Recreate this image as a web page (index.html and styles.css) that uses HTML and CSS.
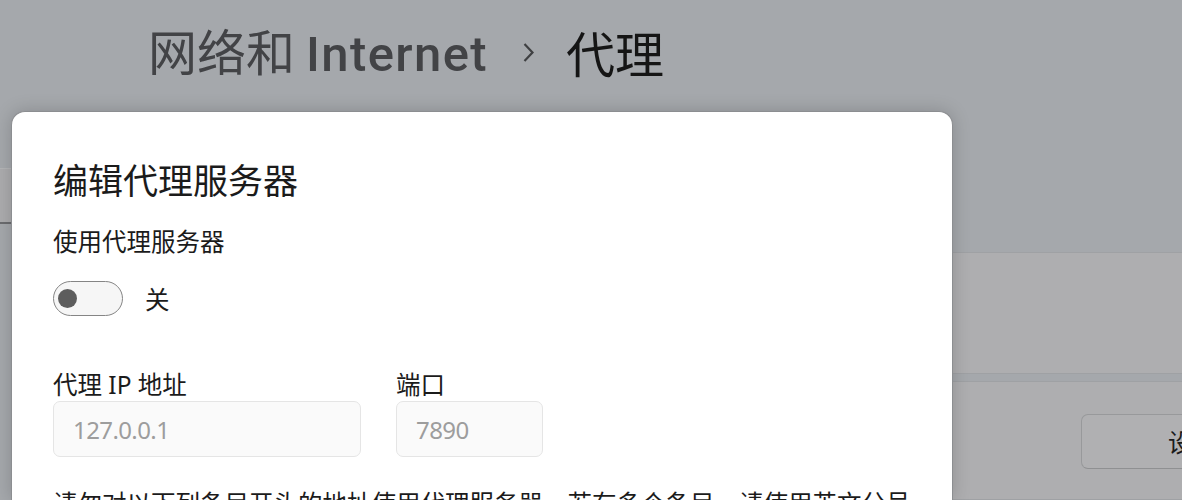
FILE: index.html
```html
<!DOCTYPE html>
<html lang="zh-CN">
<head>
<meta charset="utf-8">
<title>代理</title>
<link rel="stylesheet" href="styles.css">
</head>
<body>
<div class="page">
  <header class="header">
    <span class="crumb"><span class="crumb-cjk">网络和</span> <span class="crumb-latin">Internet</span></span>
    <svg class="chev" width="13" height="21" viewBox="0 0 13 21"><path d="M2.5 2 L10.5 10.5 L2.5 19" fill="none" stroke="#3f4042" stroke-width="2.2"/></svg>
    <span class="crumb-cur">代理</span>
  </header>
  <div class="main">
    <nav class="nav">
      <div class="search"></div>
    </nav>
    <section class="content">
      <div class="card card-top"></div>
      <div class="card card-bottom">
        <button class="btn">设置</button>
      </div>
    </section>
  </div>
</div>

<div class="dialog">
  <h1 class="title">编辑代理服务器</h1>
  <div class="label">使用代理服务器</div>
  <div class="toggle-row">
    <span class="toggle"><span class="knob"></span></span>
    <span class="toggle-text">关</span>
  </div>
  <div class="fields">
    <div class="field">
      <div class="field-label">代理 IP 地址</div>
      <div class="input input-ip">127.0.0.1</div>
    </div>
    <div class="field">
      <div class="field-label">端口</div>
      <div class="input input-port">7890</div>
    </div>
  </div>
  <p class="desc">请勿对以下列条目开头的地址使用代理服务器。若有多个条目，请使用英文分号(;)来分隔。</p>
</div>
</body>
</html>
```

FILE: styles.css
```css
* { box-sizing: border-box; }

html, body {
  margin: 0;
  padding: 0;
}

body {
  width: 1182px;
  height: 500px;
  overflow: hidden;
  background: #a5a8ac;
  font-family: "Noto Sans", "Noto Sans CJK SC", sans-serif;
  position: relative;
}

.page {
  width: 1182px;
  height: 500px;
  overflow: hidden;
  display: flex;
  flex-direction: column;
}

.header {
  height: 104px;
  flex: none;
  display: flex;
  align-items: center;
  padding-left: 148px;
  font-size: 49px;
  line-height: 60px;
}

.crumb {
  color: #424346;
  font-family: "Noto Sans CJK SC", sans-serif;
  white-space: nowrap;
}

.crumb-cjk {
  font-weight: 400;
}

.crumb-latin {
  font-family: "Roboto", sans-serif;
  font-weight: 500;
  letter-spacing: 1.4px;
}

.chev {
  margin-left: 34px;
  margin-right: 31px;
  flex: none;
}

.crumb-cur {
  color: #151515;
  font-family: "Noto Sans CJK SC", sans-serif;
  font-weight: 400;
}

.main {
  flex: 1;
  display: flex;
}

.nav {
  width: 470px;
  flex: none;
  padding-top: 64px;
}

.search {
  height: 56px;
  background: #acacae;
  border-top: 1px solid #b4b5b7;
  border-bottom: 2px solid #6b6c6f;
}

.content {
  flex: 1;
  min-width: 0;
  padding-top: 148px;
  display: flex;
  flex-direction: column;
  gap: 7px;
}

.card {
  background: #aeaeb0;
  border: 1px solid #9fa1a4;
  border-right: none;
}

.card-top {
  height: 122px;
}

.card-bottom {
  flex: 1;
  display: flex;
  align-items: flex-start;
  padding: 32px 0 0 610px;
}

.btn {
  flex: none;
  width: 223px;
  height: 55px;
  background: #b0b0b2;
  border: 1px solid #98999b;
  border-bottom-color: #8f9092;
  border-radius: 7px;
  font-family: "Noto Sans CJK SC", sans-serif;
  font-size: 24.5px;
  color: #1a1a1a;
  padding: 0;
}

.dialog {
  position: absolute;
  left: 11px;
  top: 111px;
  width: 942px;
  height: 389px;
  overflow: hidden;
  background: #ffffff;
  border: 1px solid #8c8e91;
  border-bottom: none;
  border-radius: 14px 14px 0 0;
  box-shadow: 0 0 18px rgba(0, 0, 0, 0.18);
  padding: 42px 38px 0 41px;
  font-family: "Noto Sans", "Noto Sans CJK SC", sans-serif;
  color: #1b1b1b;
}

.title {
  margin: 0;
  font-family: "Noto Sans CJK SC", sans-serif;
  font-size: 35px;
  line-height: 49px;
  font-weight: 400;
}

.label {
  margin-top: 20px;
  font-family: "Noto Sans CJK SC", sans-serif;
  font-size: 24.5px;
  line-height: 35px;
}

.toggle-row {
  margin-top: 23px;
  display: flex;
  align-items: center;
  gap: 22px;
}

.toggle {
  width: 70px;
  height: 35px;
  border: 1.75px solid #858585;
  border-radius: 18px;
  background: #f6f6f6;
  display: flex;
  align-items: center;
  padding-left: 4px;
}

.knob {
  width: 19px;
  height: 19px;
  border-radius: 50%;
  background: #5d5d5d;
}

.toggle-text {
  font-family: "Noto Sans CJK SC", sans-serif;
  font-size: 24.5px;
  line-height: 35px;
}

.fields {
  margin-top: 53px;
  display: flex;
  gap: 35px;
}

.field-label {
  font-size: 24.5px;
  line-height: 31px;
  height: 32px;
}

.input {
  height: 56px;
  border: 1px solid #e5e5e5;
  border-radius: 7px;
  background: #fafafa;
  padding-left: 19px;
  display: flex;
  align-items: center;
  font-size: 24px;
  color: #9d9d9d;
  letter-spacing: -0.6px;
}

.input-ip { width: 308px; }
.input-port { width: 147px; }

.desc {
  margin: 28px 0 0;
  font-family: "Noto Sans CJK SC", sans-serif;
  font-size: 24.5px;
  line-height: 35px;
}
```
